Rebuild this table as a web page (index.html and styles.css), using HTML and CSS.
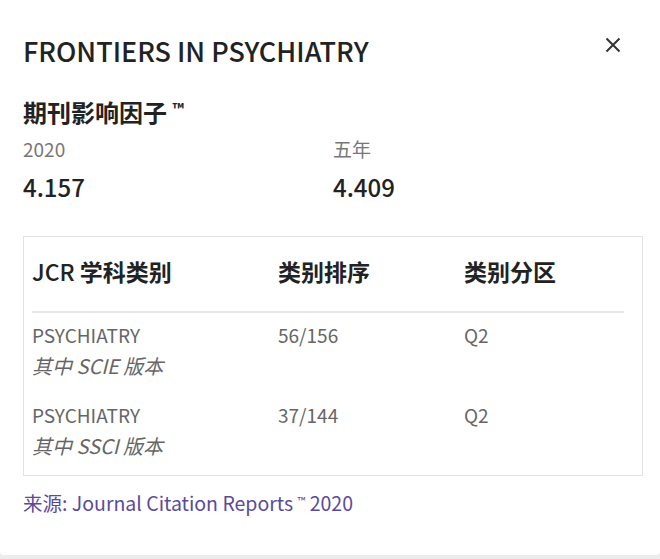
FILE: index.html
```html
<!DOCTYPE html>
<html lang="zh-CN">
<head>
<meta charset="utf-8">
<link rel="stylesheet" href="styles.css">
</head>
<body>
<div class="card">
  <div class="head">
    <h1 class="title">FRONTIERS IN PSYCHIATRY</h1>
    <button class="close" aria-label="关闭">
      <svg width="16" height="16" viewBox="0 0 16 16"><path d="M1.5 1.5 L14.5 14.5 M14.5 1.5 L1.5 14.5" stroke="#333" stroke-width="2" stroke-linecap="butt"/></svg>
    </button>
  </div>
  <h2 class="jif">期刊影响因子 <span class="tm">™</span></h2>
  <div class="metrics">
    <div class="metric">
      <div class="m-label">2020</div>
      <div class="m-value">4.157</div>
    </div>
    <div class="metric">
      <div class="m-label">五年</div>
      <div class="m-value">4.409</div>
    </div>
  </div>
  <div class="tablebox">
    <div class="row header">
      <div class="c1"><span class="jcr">JCR</span> 学科类别</div>
      <div class="c2">类别排序</div>
      <div class="c3">类别分区</div>
    </div>
    <div class="row">
      <div class="c1">PSYCHIATRY<br><em>其中 SCIE 版本</em></div>
      <div class="c2">56/156</div>
      <div class="c3">Q2</div>
    </div>
    <div class="row">
      <div class="c1">PSYCHIATRY<br><em>其中 SSCI 版本</em></div>
      <div class="c2">37/144</div>
      <div class="c3">Q2</div>
    </div>
  </div>
  <p class="source">来源: Journal Citation Reports <span class="tm2">™</span> 2020</p>
</div>
</body>
</html>
```

FILE: styles.css
```css
html, body {
  margin: 0;
  padding: 0;
}
body {
  background: #ececec;
  font-family: "Noto Sans CJK SC", "Noto Sans", sans-serif;
  color: #333;
}
.card {
  background: #fff;
  width: 660px;
  height: 555px;
  box-sizing: border-box;
  padding: 30px 18px 0 23px;
  border-radius: 0 0 4px 4px;
}
.head {
  display: flex;
  justify-content: space-between;
  align-items: flex-start;
}
.title {
  margin: 0;
  font-size: 27px;
  font-weight: 500;
  line-height: 42px;
  color: #222;
  letter-spacing: 0;
}
.close {
  border: 0;
  background: none;
  padding: 0;
  margin: 7px 21px 0 0;
  width: 16px;
  height: 16px;
  display: flex;
}
.jif {
  margin: 20px 0 0;
  font-size: 24px;
  font-weight: 700;
  line-height: 34px;
  color: #222;
}
.tm {
  font-size: 15px;
  vertical-align: 7px;
  font-weight: 700;
}
.metrics {
  display: grid;
  grid-template-columns: 310px 1fr;
  margin-top: 6px;
}
.m-label {
  font-size: 19px;
  color: #777;
  line-height: 28px;
  font-weight: 400;
}
.m-value {
  margin-top: 7px;
  font-size: 24px;
  font-weight: 500;
  color: #222;
  line-height: 34px;
}
.tablebox {
  margin-top: 32px;
  width: 620px;
  box-sizing: border-box;
  border: 1px solid #e3e3e3;
  padding: 0 18px 2px 8px;
}
.row {
  display: grid;
  grid-template-columns: 246px 186px 1fr;
  font-size: 19px;
  line-height: 31px;
  color: #666;
  padding: 2px 0 12px;
}
.row + .row {
  padding-top: 6px;
}
.row.header {
  font-size: 23px;
  font-weight: 700;
  color: #222;
  line-height: 32px;
  padding: 18px 0 24px;
  border-bottom: 2px solid #e6e6e6;
  margin-bottom: 0;
}
.jcr {
  font-weight: 500;
}
.row em {
  font-style: italic;
  font-size: 20px;
}
.source {
  margin: 9px 0 0;
  font-size: 19.5px;
  line-height: 30px;
  color: #5b4a9a;
}
.tm2 {
  font-size: 11px;
  vertical-align: 6px;
}
```
